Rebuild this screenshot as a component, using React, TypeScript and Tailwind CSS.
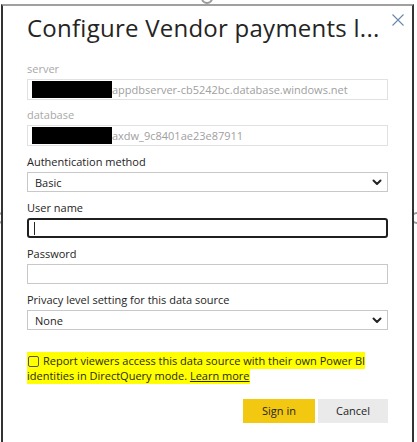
const font = { fontFamily: '"Open Sans", "Noto Sans", sans-serif' }

function Label({ children, muted }: { children: React.ReactNode; muted?: boolean }) {
    return (
        <div className={`text-[11px] leading-[16px] ${muted ? 'text-[#a8a8a8]' : 'text-[#252423]'}`}>
            {children}
        </div>
    )
}

function ReadOnlyField({ hidden, value }: { hidden: number; value: string }) {
    return (
        <div className="mt-[2px] h-[21px] border border-[#e1e1e1] flex items-center pl-[4px]">
            <div className="h-[17px] bg-black" style={{ width: hidden }} />
            <span className="text-[11px] text-[#a0a0a0] leading-none">{value}</span>
        </div>
    )
}

function Chevron() {
    return (
        <svg width="10" height="7" viewBox="0 0 10 7" fill="none" stroke="#252423" strokeWidth="2" strokeLinecap="round" strokeLinejoin="round">
            <path d="M1.5 1.5 L5 5 L8.5 1.5" />
        </svg>
    )
}

function Select({ value }: { value: string }) {
    return (
        <div className="mt-[2px] h-[20px] border border-[#c8c8c8] flex items-center justify-between pl-[7px] pr-[5px]">
            <span className="text-[11px] text-[#252423] leading-none">{value}</span>
            <Chevron />
        </div>
    )
}

export default function App() {
    return (
        <div className="relative w-[417px] h-[442px] bg-white overflow-hidden" style={font}>
            {/* screenshot resize handles */}
            <div className="absolute left-[201px] top-[-8px] w-[12px] h-[12px] rounded-full border-2 border-[#9a9a9a] bg-white" />
            <div className="absolute left-[202px] top-[436px] w-[12px] h-[12px] rounded-full border-2 border-[#9a9a9a] bg-white" />
            <div className="absolute left-[-8px] top-[212px] w-[12px] h-[12px] rounded-full border-2 border-[#9a9a9a] bg-white" />
            <div className="absolute left-[411px] top-[212px] w-[12px] h-[12px] rounded-full border-2 border-[#9a9a9a] bg-white" />

            <div className="relative ml-[1px] mt-[4px] w-[413px] h-[460px] border-t-2 border-t-[#a0a0a0] border-l-2 border-l-[#333] border-r-2 border-r-[#333] bg-white pl-[24px] pr-[24px]">
                <button className="absolute right-[8px] top-[8px] text-[#6b87ad]">
                    <svg width="12" height="12" viewBox="0 0 12 12" fill="none" stroke="currentColor" strokeWidth="1.1">
                        <path d="M0.5 0.5 L11.5 11.5 M11.5 0.5 L0.5 11.5" />
                    </svg>
                </button>

                <h1 className="mt-[7px] text-[24px] leading-[30px] text-[#252423] tracking-[0.25px] whitespace-nowrap">
                    Configure Vendor payments l...
                </h1>

                <div className="mt-[18px]">
                    <Label muted>server</Label>
                    <ReadOnlyField hidden={80} value="appdbserver-cb5242bc.database.windows.net" />
                </div>

                <div className="mt-[7px]">
                    <Label muted>database</Label>
                    <ReadOnlyField hidden={80} value="axdw_9c8401ae23e87911" />
                </div>

                <div className="mt-[8px]">
                    <Label>Authentication method</Label>
                    <Select value="Basic" />
                </div>

                <div className="mt-[8px]">
                    <Label>User name</Label>
                    <div className="mt-[2px] h-[20px] border-2 border-[#1f1f1f] rounded-[3px] flex items-center pl-[5px]">
                        <div className="w-[1px] h-[13px] bg-[#252423]" />
                    </div>
                </div>

                <div className="mt-[8px]">
                    <Label>Password</Label>
                    <div className="mt-[2px] h-[20px] border border-[#c8c8c8]" />
                </div>

                <div className="mt-[8px]">
                    <Label>Privacy level setting for this data source</Label>
                    <Select value="None" />
                </div>

                <div className="mt-[23px] pr-[20px] text-[11px] leading-[15px] text-[#2b2b10]">
                    <span className="bg-[#ffff00] [box-decoration-break:clone] py-[1px]">
                        <span className="inline-block align-[-2px] w-[11px] h-[11px] border border-[#555] rounded-[2px] mr-[4px] ml-[1px]" />
                        Report viewers access this data source with their own Power BI identities in DirectQuery mode.{' '}
                        <a className="underline underline-offset-1">Learn more</a>
                    </span>
                </div>

                <div className="mt-[16px] flex justify-end gap-[3px]">
                    <button className="w-[72px] h-[24px] bg-[#f2c811] text-[11px] text-[#252423]">Sign in</button>
                    <button className="w-[70px] h-[24px] bg-[#eaeaea] text-[11px] text-[#252423]">Cancel</button>
                </div>
            </div>
        </div>
    )
}
